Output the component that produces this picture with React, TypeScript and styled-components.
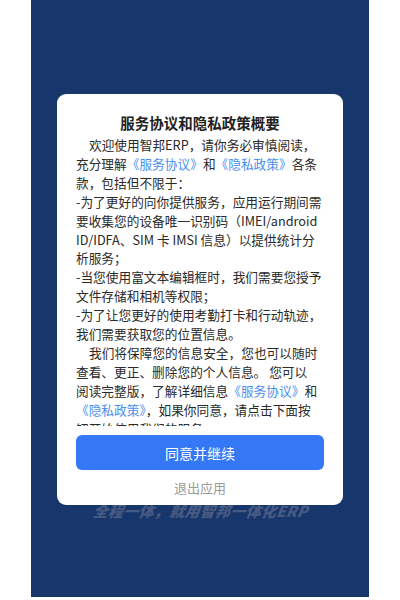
import styled, { createGlobalStyle } from "styled-components";

const GlobalStyle = createGlobalStyle`
  html, body {
    margin: 0;
    padding: 0;
    background: #ffffff;
  }
  body {
    font-family: "Noto Sans CJK SC", "Noto Sans", sans-serif;
  }
`;

const Screen = styled.div`
  width: 338px;
  height: 597px;
  margin: 0 auto;
  background: #17366b;
  display: flex;
  flex-direction: column;
  align-items: center;
  overflow: hidden;
`;

const Dialog = styled.div`
  position: relative;
  z-index: 1;
  margin-top: 94px;
  width: 286px;
  height: 411px;
  background: #ffffff;
  border-radius: 9px;
  display: flex;
  flex-direction: column;
  align-items: center;
  box-sizing: border-box;
  padding: 18px 19px 0;
`;

const Title = styled.h2`
  margin: 0;
  font-size: 14.5px;
  font-weight: 700;
  color: #222222;
  line-height: 22px;
`;

const Scroll = styled.div`
  margin-top: 2px;
  width: 100%;
  height: 290px;
  overflow: hidden;
`;

const Para = styled.p<{ $indent?: boolean }>`
  margin: 0;
  font-size: 12.7px;
  line-height: 18.9px;
  color: #2a2a2a;
  white-space: nowrap;
  text-indent: ${(p) => (p.$indent ? "13px" : "0")};
`;

const Link = styled.span`
  color: #4a8ff0;
`;

const PrimaryButton = styled.button`
  margin-top: 9px;
  flex-shrink: 0;
  width: 248px;
  height: 35px;
  border: none;
  border-radius: 6px;
  background: #3478f6;
  color: #ffffff;
  font-family: inherit;
  font-size: 14px;
`;

const TextButton = styled.button`
  margin-top: 8px;
  border: none;
  background: none;
  color: #9a9a9a;
  font-family: inherit;
  font-size: 13px;
  line-height: 20px;
  padding: 0;
`;

const Tagline = styled.div`
  margin-top: -4px;
  font-size: 15px;
  line-height: 20px;
  font-weight: 900;
  font-style: italic;
  color: #475a82;
  letter-spacing: 0.3px;
  transform: skewX(-8deg);
`;

export default function App() {
  return (
    <>
      <GlobalStyle />
      <Screen>
        <Dialog>
          <Title>服务协议和隐私政策概要</Title>
          <Scroll>
            <Para $indent>
              欢迎使用智邦ERP，请你务必审慎阅读，
              <br />
              充分理解<Link>《服务协议》</Link>和<Link>《隐私政策》</Link>各条
              <br />
              款，包括但不限于：
              <br />
              -为了更好的向你提供服务，应用运行期间需
              <br />
              要收集您的设备唯一识别码（IMEI/android
              <br />
              ID/IDFA、SIM 卡 IMSI 信息）以提供统计分
              <br />
              析服务；
              <br />
              -当您使用富文本编辑框时，我们需要您授予
              <br />
              文件存储和相机等权限；
              <br />
              -为了让您更好的使用考勤打卡和行动轨迹，
              <br />
              我们需要获取您的位置信息。
            </Para>
            <Para $indent>
              我们将保障您的信息安全，您也可以随时
              <br />
              查看、更正、删除您的个人信息。 您可以
              <br />
              阅读完整版，了解详细信息<Link>《服务协议》</Link>和
              <br />
              <Link>《隐私政策》</Link>，如果你同意，请点击下面按
              <br />
              钮开始使用我们的服务。
            </Para>
          </Scroll>
          <PrimaryButton>同意并继续</PrimaryButton>
          <TextButton>退出应用</TextButton>
        </Dialog>
        <Tagline>全程一体，就用智邦一体化ERP</Tagline>
      </Screen>
    </>
  );
}
